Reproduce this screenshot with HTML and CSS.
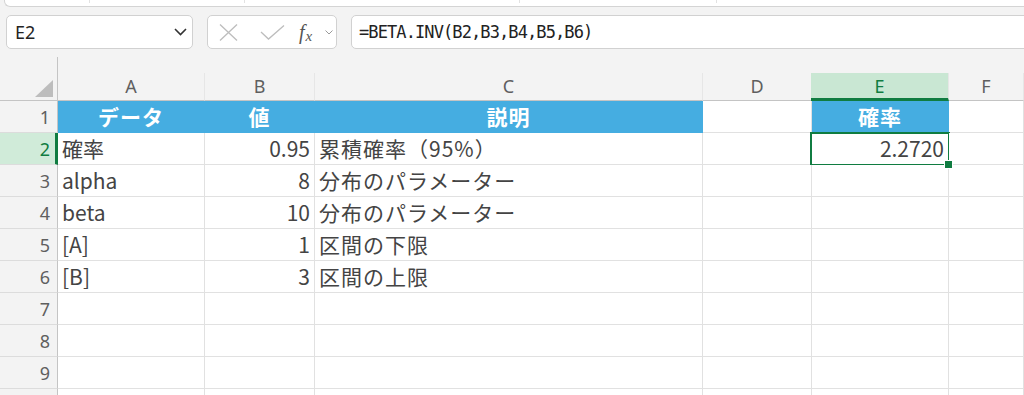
FILE: index.html
```html
<!DOCTYPE html>
<html lang="ja">
<head>
    <meta charset="UTF-8">
    <title>BETA.INV</title>
    <link rel="stylesheet" href="styles.css">
</head>
<body>
    <div class="ribbon-edge">
        <span class="seg" style="width:85px"></span>
        <span class="seg" style="width:155px"></span>
        <span class="seg" style="width:275px"></span>
        <span class="seg" style="width:197px"></span>
    </div>

    <div class="formula-row">
        <div class="name-box">
            <span>E2</span>
            <svg width="13" height="8" viewBox="0 0 13 8"><path d="M1 1 L6.5 6.5 L12 1" fill="none" stroke="#333" stroke-width="1.6"/></svg>
        </div>
        <div class="fx-box">
            <svg class="ic-x" width="19" height="17" viewBox="0 0 19 17"><path d="M1 0.5 L18 16.5 M18 0.5 L1 16.5" stroke="#bdbdbd" stroke-width="1.3" fill="none"/></svg>
            <svg class="ic-ok" width="25" height="15" viewBox="0 0 25 15"><path d="M1 7 L8.5 14 L24 0.5" stroke="#bdbdbd" stroke-width="1.3" fill="none"/></svg>
            <span class="fx"><i>f</i><span>x</span></span>
            <svg class="ic-dd" width="8" height="5" viewBox="0 0 8 5"><path d="M0.5 0.5 L4 4 L7.5 0.5" stroke="#9a9a9a" stroke-width="1" fill="none"/></svg>
        </div>
        <div class="formula-box">=BETA.INV(B2,B3,B4,B5,B6)</div>
    </div>

    <div class="sheet">
        <div class="corner"><svg width="18" height="17" viewBox="0 0 18 17"><polygon points="18,0 18,17 0,17" fill="#bdbdbd"/></svg></div>
        <div class="col-head">A</div>
        <div class="col-head">B</div>
        <div class="col-head">C</div>
        <div class="col-head">D</div>
        <div class="col-head active">E</div>
        <div class="col-head">F</div>

        <div class="row-head">1</div>
        <div class="cell hd">データ</div>
        <div class="cell hd">値</div>
        <div class="cell hd">説明</div>
        <div class="cell"></div>
        <div class="cell hd">確率</div>
        <div class="cell"></div>

        <div class="row-head active">2</div>
        <div class="cell">確率</div>
        <div class="cell num">0.95</div>
        <div class="cell jp">累積確率（95%）</div>
        <div class="cell"></div>
        <div class="cell num selected">2.2720</div>
        <div class="cell"></div>

        <div class="row-head">3</div>
        <div class="cell">alpha</div>
        <div class="cell num">8</div>
        <div class="cell jp">分布のパラメーター</div>
        <div class="cell"></div>
        <div class="cell"></div>
        <div class="cell"></div>

        <div class="row-head">4</div>
        <div class="cell">beta</div>
        <div class="cell num">10</div>
        <div class="cell jp">分布のパラメーター</div>
        <div class="cell"></div>
        <div class="cell"></div>
        <div class="cell"></div>

        <div class="row-head">5</div>
        <div class="cell">[A]</div>
        <div class="cell num">1</div>
        <div class="cell jp">区間の下限</div>
        <div class="cell"></div>
        <div class="cell"></div>
        <div class="cell"></div>

        <div class="row-head">6</div>
        <div class="cell">[B]</div>
        <div class="cell num">3</div>
        <div class="cell jp">区間の上限</div>
        <div class="cell"></div>
        <div class="cell"></div>
        <div class="cell"></div>

        <div class="row-head">7</div>
        <div class="cell"></div><div class="cell"></div><div class="cell"></div>
        <div class="cell"></div><div class="cell"></div><div class="cell"></div>

        <div class="row-head">8</div>
        <div class="cell"></div><div class="cell"></div><div class="cell"></div>
        <div class="cell"></div><div class="cell"></div><div class="cell"></div>

        <div class="row-head">9</div>
        <div class="cell"></div><div class="cell"></div><div class="cell"></div>
        <div class="cell"></div><div class="cell"></div><div class="cell"></div>

        <!-- row 10, only its top edge is on screen -->
        <div class="row-head cut"></div>
        <div class="cell cut"></div><div class="cell cut"></div><div class="cell cut"></div>
        <div class="cell cut"></div><div class="cell cut"></div><div class="cell cut"></div>
    </div>
</body>
</html>
```

FILE: styles.css
```css
* {
    box-sizing: border-box;
}
body {
    margin: 0;
    height: 395px;
    overflow: hidden;
    background-color: #f3f3f3;
    font-family: "Noto Sans", sans-serif;
}
.ribbon-edge {
    display: flex;
    height: 7px;
    margin-left: 4px;
    background-color: #fff;
    border-left: 1px solid #d4d4d4;
    border-bottom: 1px solid #d4d4d4;
    border-bottom-left-radius: 6px;
}
.ribbon-edge .seg {
    height: 3px;
    border-right: 1px solid #e2e2e2;
}
.formula-row {
    display: flex;
    gap: 14px;
    height: 42px;
    padding: 8px 0 0 6px;
    margin-right: -20px;
}
.name-box, .fx-box, .formula-box {
    height: 34px;
    background-color: #fff;
    border: 1px solid #d1d1d1;
    border-radius: 5px;
    display: flex;
    align-items: center;
}
.name-box {
    width: 187px;
    padding: 0 5px 0 8px;
    justify-content: space-between;
    font-size: 18px;
    color: #242424;
}
.fx-box {
    width: 130px;
    padding-left: 11px;
}
.ic-ok {
    margin-left: 22px;
}
.fx {
    margin-left: 14px;
    font-family: "Liberation Serif", serif;
    color: #555;
    width: 17px;
}
.fx i {
    font-size: 20px;
}
.fx span {
    font-size: 15px;
    font-style: italic;
    position: relative;
    top: 2px;
    left: 1px;
}
.ic-dd {
    margin-left: 9px;
}
.formula-box {
    flex: 1;
    padding-left: 7px;
    font-family: "DejaVu Sans Mono", monospace;
    font-size: 17px;
    letter-spacing: -0.9px;
    color: #222;
}

/* grid */
.sheet {
    margin-top: 8px;
    display: grid;
    grid-template-columns: 58px 147px 110px 388px 109px 137px 1fr;
    grid-template-rows: 44px repeat(9, 32px) 6px;
}
.corner {
    border-right: 1px solid #c4c4c4;
    border-bottom: 1px solid #c4c4c4;
    display: flex;
    align-items: flex-end;
    justify-content: flex-end;
    padding: 0 4px 3px 0;
}
.col-head {
    margin-top: 16px;
    border-bottom: 1px solid #c4c4c4;
    border-right: 1px solid #e6e6e6;
    text-align: center;
    font-size: 18px;
    line-height: 27px;
    color: #5f5f5f;
}
.col-head.active {
    background-color: #c9e7d3;
    color: #107c41;
    border-bottom: 3px solid #107c41;
    margin-left: -1px;
}
.row-head {
    border-right: 1px solid #c4c4c4;
    border-bottom: 1px solid #dcdcdc;
    text-align: right;
    padding-right: 7px;
    font-size: 18px;
    line-height: 32px;
    color: #5f5f5f;
}
.row-head.active {
    background-color: #d0ebd9;
    color: #107c41;
    border-right: 3px solid #107c41;
    padding-right: 5px;
}
.cell {
    position: relative;
    background-color: #fff;
    border-right: 1px solid #e1e1e1;
    border-bottom: 1px solid #e1e1e1;
    padding: 0 4px;
    font-family: "Noto Sans CJK JP", sans-serif;
    font-size: 21px;
    line-height: 31px;
    color: #444;
    white-space: nowrap;
}
.row-head.cut, .cell.cut {
    border-bottom: none;
}
.cell.jp {
    letter-spacing: 1px;
}
.cell.num {
    text-align: right;
}
.cell.hd {
    background-color: #45ade1;
    border-color: #45ade1;
    color: #fff;
    font-weight: bold;
    text-align: center;
    letter-spacing: 1px;
}
.cell.selected::after {
    content: "";
    position: absolute;
    left: -2px;
    top: -1px;
    right: -2px;
    bottom: -2px;
    border: 2px solid #107c41;
}
.cell.selected::before {
    content: "";
    position: absolute;
    right: -5px;
    bottom: -5px;
    width: 7px;
    height: 7px;
    background-color: #107c41;
    border: 1px solid #fff;
    z-index: 1;
}
```
